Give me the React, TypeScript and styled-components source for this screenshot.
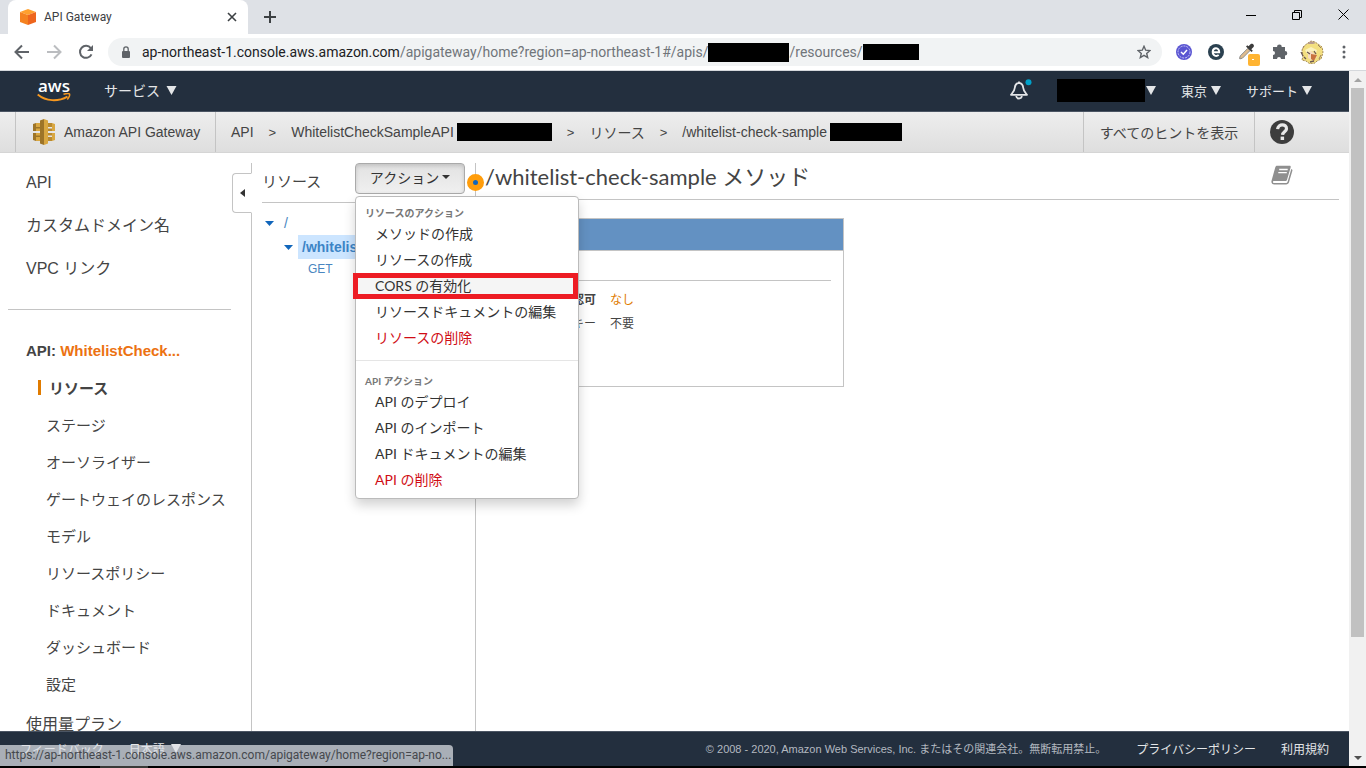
import React from "react";
import styled, { createGlobalStyle, css } from "styled-components";

const sans = '"Liberation Sans", "Noto Sans CJK JP", sans-serif';
const chromeUi = 'Roboto, "Noto Sans CJK JP", sans-serif';
const lato = 'Lato, "Noto Sans CJK JP", sans-serif';

const GlobalStyle = createGlobalStyle`
  * { box-sizing: border-box; }
  body { margin: 0; background: #fff; color: #444; font-family: ${sans}; font-size: 14px; }
  a { color: inherit; text-decoration: none; }
  button { font: inherit; color: inherit; background: none; border: 0; padding: 0; cursor: pointer; }
  ul { list-style: none; margin: 0; padding: 0; }
  svg { display: block; flex: none; }
`;

const BrowserWindow = styled.div`
  position: relative;
  display: flex;
  flex-direction: column;
  height: 100vh;
  overflow: hidden;
`;

/* ---------- browser frame ---------- */

const TabStrip = styled.div`
  flex: none;
  display: flex;
  height: 34px;
  padding-left: 8px;
  background: #dee1e6;
  font-family: ${chromeUi};
`;

const Tab = styled.div`
  display: flex;
  align-items: center;
  width: 240px;
  padding: 0 10px 0 12px;
  border-radius: 8px 8px 0 0;
  background: #fff;
  color: #3c4043;
  font-size: 12px;
`;

const TabTitle = styled.span`
  flex: 1;
  margin-left: 8px;
`;

const IconButton = styled.button`
  display: flex;
  align-items: center;
  justify-content: center;
`;

const NewTab = styled(IconButton)`
  width: 44px;
`;

const WindowControls = styled.div`
  display: flex;
  margin-left: auto;
  height: 29px;

  button { width: 46px; }
`;

const Toolbar = styled.div`
  flex: none;
  display: flex;
  align-items: center;
  height: 37px;
  padding: 0 10px 0 14px;
  border-bottom: 1px solid #d5d8dc;
  background: #fff;
`;

const NavButtons = styled.div`
  display: flex;
  gap: 16px;
  margin-right: 14px;
`;

const AddressBar = styled.div`
  flex: 1;
  display: flex;
  align-items: center;
  height: 28px;
  padding: 0 11px 0 12px;
  border-radius: 14px;
  background: #f1f3f4;
  font-family: ${chromeUi};
  font-size: 14px;
  color: #70757a;
  white-space: nowrap;
`;

const Host = styled.span`
  margin-left: 10px;
  color: #202124;
`;

const Redacted = styled.span<{ $w: number; $h: number }>`
  flex: none;
  width: ${(p) => p.$w}px;
  height: ${(p) => p.$h}px;
  background: #000;
`;

const BarEnd = styled.span`
  display: flex;
  margin-left: auto;
`;

const Extensions = styled.div`
  display: flex;
  align-items: center;
  gap: 8px;
  margin-left: 10px;
`;

const Viewport = styled.div`
  flex: 1;
  min-height: 0;
  display: flex;
`;

const Page = styled.div`
  flex: 1;
  min-width: 0;
  display: flex;
  flex-direction: column;
`;

const Scrollbar = styled.div`
  flex: none;
  display: flex;
  flex-direction: column;
  align-items: center;
  width: 17px;
  background: #f1f1f1;
`;

const ScrollTrack = styled.div`
  flex: 1;
  width: 13px;
`;

const ScrollThumb = styled.div`
  height: 83%;
  background: #c1c1c1;
`;

const ScrollArrow = styled(IconButton)`
  width: 17px;
  height: 17px;
`;

const DesktopEdge = styled.div`
  flex: none;
  height: 2px;
  padding-left: 100px;
  background: #000;

  &::before { content: ""; display: block; width: 48px; height: 2px; background: #3a3a38; }
`;

const StatusBubble = styled.div`
  position: absolute;
  left: 0;
  bottom: 2px;
  width: 453px;
  height: 21px;
  padding: 0 5px;
  border-radius: 0 4px 0 0;
  background: rgba(222, 225, 230, 0.72);
  color: #45484d;
  font-family: ${chromeUi};
  font-size: 12px;
  line-height: 21px;
  white-space: nowrap;
  overflow: hidden;
`;

/* ---------- console header ---------- */

const TopNav = styled.header`
  flex: none;
  display: flex;
  align-items: center;
  height: 41px;
  padding: 0 37px 2px;
  border-bottom: 1px solid #4b5563;
  background: #232f3e;
  color: #e4e6e8;
`;

const AwsLogo = styled.a`
  display: flex;
  flex-direction: column;
  align-items: center;
  width: 34px;
  color: #fff;
  font-family: "Open Sans", sans-serif;
  font-weight: 600;
  font-size: 17px;
  line-height: 14px;
`;

const NavMenu = styled.button<{ $size: number; $gap: number }>`
  display: flex;
  align-items: center;
  gap: ${(p) => p.$gap}px;
  font-size: ${(p) => p.$size}px;
`;

const ServicesMenu = styled(NavMenu)`
  margin-left: 33px;
`;

const NavRight = styled.div`
  display: flex;
  align-items: center;
  gap: 25px;
  margin-left: auto;
`;

const Account = styled.button`
  display: flex;
  align-items: center;
  gap: 1px;
`;

const CrumbBar = styled.div`
  flex: none;
  display: flex;
  height: 41px;
  padding-left: 15px;
  border-bottom: 1px solid #d5d5d5;
  background: linear-gradient(#eee, #dedede);
  font-size: 14px;
`;

const cell = css`
  display: flex;
  align-items: center;
  border-left: 1px solid #c4c4c4;
`;

const ServiceCell = styled.a`
  ${cell}
  width: 200px;
  padding-left: 16px;
  gap: 8px;
`;

const Crumbs = styled.nav`
  ${cell}
  flex: 1;
  padding-left: 15px;
  gap: 15px;
  white-space: nowrap;
`;

const Crumb = styled.a`
  display: flex;
  align-items: center;
  gap: 3px;
`;

const Separator = styled.span`
  font-size: 13px;
`;

const HintsCell = styled.button`
  ${cell}
  width: 171px;
  justify-content: center;
  border-left: 1px solid #c4c4c4;
`;

const HelpCell = styled.button`
  ${cell}
  width: 95px;
  padding-left: 15px;
  border-left: 1px solid #c4c4c4;
`;

/* ---------- body columns ---------- */

const Body = styled.div`
  flex: 1;
  min-height: 0;
  display: flex;
  padding-top: 10px;
  overflow: hidden;
`;

const Sidebar = styled.aside`
  position: relative;
  flex: none;
  width: 252px;
  border-right: 1px solid #c4c4c4;
`;

const CollapseTab = styled.button`
  position: absolute;
  top: 10px;
  right: -1px;
  display: flex;
  align-items: center;
  width: 20px;
  height: 40px;
  padding-left: 7px;
  border: 1px solid #c4c4c4;
  border-right: 1px solid #fff;
  border-radius: 4px 0 0 4px;
  background: #fff;
`;

const TopLinks = styled.ul`
  margin: 0 20px 0 8px;
  padding: 0 18px 17px;
  border-bottom: 1px solid #c4c4c4;
  font-size: 16px;
  white-space: nowrap;

  li { height: 43px; line-height: 40px; }
`;

const ApiHeading = styled.h2`
  margin: 31px 0 8px 26px;
  font-size: 15px;
  line-height: 20px;

  a { color: #ec7211; }
`;

const SubLink = styled.li<{ $active?: boolean }>`
  display: flex;
  align-items: center;
  height: 37px;
  padding-left: 46px;
  font-size: 15px;
  white-space: nowrap;
  ${(p) =>
    p.$active &&
    css`
      padding-left: 38px;
      font-weight: bold;
      &::before { content: ""; width: 3px; height: 15px; margin-right: 8px; background: #e07b00; }
    `}
`;

const PlanLink = styled.a`
  display: block;
  margin-left: 26px;
  font-size: 16px;
  line-height: 46px;
`;

const ResourcePanel = styled.section`
  position: relative;
  z-index: 1;
  flex: none;
  width: 224px;
  padding-left: 10px;
  border-right: 1px solid #c4c4c4;
`;

const PanelHead = styled.div`
  display: flex;
  align-items: flex-start;
  justify-content: space-between;
  height: 40px;
  padding-right: 10px;
  border-bottom: 1px solid #c4c4c4;
`;

const PanelTitle = styled.h2`
  margin: 0;
  font-size: 15px;
  font-weight: normal;
  line-height: 38px;
`;

const ActionWrap = styled.div`
  position: relative;
`;

const ActionButton = styled.button`
  display: flex;
  align-items: center;
  justify-content: center;
  gap: 3px;
  width: 110px;
  height: 31px;
  padding-bottom: 3px;
  border: 1px solid #aaa;
  border-radius: 4px;
  background: linear-gradient(#e2e2e2, #f0f0f0);
  box-shadow: inset 0 2px 4px rgba(0, 0, 0, 0.15);
  color: #333;
  font-family: ${lato};
  font-size: 14px;
`;

const Menu = styled.div`
  position: absolute;
  top: 33px;
  left: 0;
  width: 224px;
  padding: 8px 0 5px;
  border: 1px solid #bbb;
  border-radius: 4px;
  background: #fff;
  box-shadow: 0 6px 12px rgba(0, 0, 0, 0.18);
  font-family: ${lato};
`;

const MenuLabel = styled.div`
  height: 16px;
  padding-left: 9px;
  color: #777;
  font-size: 10px;
  font-weight: bold;
  line-height: 16px;
`;

const MenuItem = styled.a<{ $danger?: boolean; $marked?: boolean }>`
  position: relative;
  display: block;
  height: 26px;
  padding-left: 19px;
  color: ${(p) => (p.$danger ? "#d00d15" : "#333")};
  font-size: 14px;
  line-height: 26px;
  white-space: nowrap;
  ${(p) =>
    p.$marked &&
    css`
      background: #f5f5f5;
      &::after { content: ""; position: absolute; inset: 0 0 0 -3px; border: 5px solid #ed1c24; }
    `}
`;

const MenuRule = styled.div`
  height: 1px;
  margin: 9px 0 12px;
  background: #e5e5e5;
`;

const Tree = styled.ul`
  padding-top: 8px;
  color: #4a86c0;
  overflow: hidden;
`;

const TreeNode = styled.li<{ $depth: number }>`
  display: flex;
  align-items: center;
  gap: 10px;
  height: 24px;
  padding-left: ${(p) => 3 + p.$depth * 19}px;
`;

const SelectedPath = styled.a`
  flex: 1;
  margin-left: -5px;
  padding-left: 4px;
  background: #cce5ff;
  color: #3c84c6;
  font-size: 14px;
  font-weight: bold;
  line-height: 24px;
  white-space: nowrap;
  overflow: hidden;
`;

const MethodNode = styled.li`
  padding-left: 46px;
  font-size: 12px;
  line-height: 20px;
`;

const SplitHandle = styled.button`
  position: absolute;
  top: 11px;
  right: -9px;
  width: 17px;
  height: 17px;
  border: 6px solid #ff9d0b;
  border-radius: 50%;
  background: #1166bb;
`;

const Detail = styled.main`
  flex: 1;
  min-width: 0;
  padding: 0 10px 0 9px;
`;

const DetailHead = styled.div`
  display: flex;
  align-items: flex-start;
  justify-content: space-between;
  height: 37px;
  padding-right: 46px;
  border-bottom: 1px solid #c4c4c4;
`;

const DocsButton = styled(IconButton)`
  height: 24px;
`;

const DetailTitle = styled.h1`
  margin: 0;
  color: #444;
  font-family: ${lato};
  font-size: 22px;
  font-weight: normal;
  line-height: 28px;
`;

const MethodCard = styled.section`
  width: 359px;
  height: 169px;
  margin-top: 18px;
  border: 1px solid #c4c4c4;
`;

const CardBand = styled.div`
  height: 32px;
  border-bottom: 1px solid #c4c4c4;
  background: #6391c2;
`;

const Facts = styled.dl`
  display: grid;
  grid-template-columns: 98px 1fr;
  column-gap: 14px;
  margin: 29px 12px 0;
  padding-top: 7px;
  border-top: 1px solid #c4c4c4;
  font-size: 12px;
  line-height: 24px;

  dt { text-align: right; }
  dt:first-of-type { font-weight: bold; }
  dd { margin: 0; }
  dd:first-of-type { color: #e07b00; }
`;

/* ---------- footer ---------- */

const Footer = styled.footer`
  flex: none;
  display: flex;
  align-items: center;
  gap: 25px;
  height: 35px;
  padding: 0 20px 2px;
  border-top: 1px solid #4b5563;
  background: #232f3e;
  color: #e4e6e8;
  font-size: 12px;
  white-space: nowrap;
`;

const Legal = styled.span`
  margin: 0 5px 0 auto;
  color: #b3b9c0;
  font-size: 11px;
`;

/* ---------- icons ---------- */

const Caret = ({ w = 10, h = 9 }: { w?: number; h?: number }) => (
  <svg width={w} height={h} viewBox="0 0 10 9"><path d="M0 0h10L5 9z" fill="currentColor" /></svg>
);

const CubeIcon = () => (
  <svg width="16" height="16" viewBox="0 0 16 16">
    <path d="M8 0l8 3-8 3-8-3z" fill="#ffa02e" />
    <path d="M0 3l8 3v10l-8-3z" fill="#f58220" />
    <path d="M16 3L8 6v10l8-3z" fill="#ee651d" />
  </svg>
);

const GatewayIcon = () => (
  <svg width="24" height="26" viewBox="0 0 24 26">
    <path d="M1 5l3-1v3h5v3H4v2H1zM1 14h3v2h5v3H4v3l-3-1z" fill="#9d7428" />
    <path d="M4 4h4v4H4zM4 9.500h5V12H4zM4 14h5v2.500H4zM4 18h4v4H4z" fill="#d9a741" />
    <path d="M23 5l-3-1v8h3zM23 14h-3v8l3-1z" fill="#d9a741" />
    <path d="M16 4h4v4h-4zM15 9.500h5V12h-5zM15 14h5v2.500h-5zM16 18h4v4h-4z" fill="#b98a30" />
    <path d="M8 1.500L12 0v26l-4-1.500z" fill="#9d7428" />
    <path d="M12 0l4 1.500v23L12 26z" fill="#d9a741" />
  </svg>
);

const Smile = () => (
  <svg width="34" height="9" viewBox="0 0 34 9" fill="none" stroke="#f7981f">
    <path d="M.7 1.500C9 8.500 21 9 30.500 3.600" strokeWidth="1.800" />
    <path d="M26.500 1.300c3-.9 5.500-.8 6-.2s-.2 3.200-2.200 5.400" strokeWidth="1.500" />
  </svg>
);

const BellIcon = () => (
  <svg width="23" height="22" viewBox="0 0 23 22" fill="none" stroke="#e4e6e8" strokeWidth="1.800">
    <path d="M10 3.800c-2.800.4-4 2.300-4.200 5-.2 3-1.800 4.400-3.800 7h16c-2-2.600-3.600-4-3.800-7-.2-2.700-1.400-4.600-4.200-5z" strokeLinejoin="round" />
    <path d="M10 4V2.400M7.200 17c.3 3.300 5.300 3.300 5.600 0" />
    <circle cx="19.500" cy="3.200" r="3" fill="#00a1c9" stroke="none" />
  </svg>
);

const HelpIcon = () => (
  <svg width="24" height="24" viewBox="0 0 24 24">
    <circle cx="12" cy="12" r="12" fill="#3d3d3d" />
    <path d="M7.600 9.200c.4-6 9.200-5.600 8.900-.4-.2 3-3.700 3-3.900 6" fill="none" stroke="#e8e8e8" strokeWidth="3.200" />
    <rect x="10.600" y="16.600" width="3.500" height="3.400" fill="#e8e8e8" />
  </svg>
);

const BookIcon = () => (
  <svg width="22" height="20" viewBox="0 0 22 20">
    <path d="M6 .7h12.500c1 0 1.400.6 1.200 1.500l-3.600 12.300c-.3 1-.9 1.500-2 1.500H3c-1.500 0-1.300 2 .2 2h11.500c1 0 1.600-.4 1.900-1.300L20.300 4c1 .3 1.400 1 1 2L18 17.300c-.4 1.300-1.400 2.100-2.900 2.100H3.300C1 19.400-.1 17.500.6 15.600L4.300 2.300C4.600 1.300 5.100.7 6 .7z" fill="#8f8f8f" />
    <path d="M8.200 4.500h8.500M7.300 7.700h8.500" stroke="#fff" strokeWidth="1.300" />
  </svg>
);

const EyedropperIcon = () => (
  <svg width="24" height="28" viewBox="0 0 24 28">
    <path d="M3.500 20.500l.8-2.600 7.500-7.500 2.200 2.200-7.500 7.500-2.600.8z" fill="#e0bb8c" stroke="#8a8a8a" />
    <path d="M10 8.500l5.500 5.500 1.300-1.300-1.500-1.500 2.200-2.200c1.600-1.800-1.200-4.400-3-2.800l-2 2-1.200-1z" fill="#3c3c3c" />
    <rect x="12" y="16" width="12" height="12" rx="2" fill="#ffb432" />
    <path d="M16 21.500h2" stroke="#fff" />
  </svg>
);

const AvatarIcon = () => (
  <svg width="24" height="24" viewBox="0 0 24 24">
    <path d="M2 10l2-4 4-3 3-2 4 1 3 2 4 3 1 5-1 4-1 3-4 2-2 2-5 1-4-3-4-1 1-4z" fill="#f3df80" stroke="#a58a55" strokeDasharray="2 1" />
    <path d="M7 4l4-3 5 2-3 1z" fill="#b79a90" />
    <path d="M5 10l6-3 6 3-1 3-4-2-5 3z" fill="#fbf2bd" />
    <path d="M8 12l3-1 4 3 2 3-4 4-5-3z" fill="#f5dcc0" />
    <path d="M11 14l6 1-3 6-3-2z" fill="#c8713f" />
    <path d="M7 12l3 2M14 11l2 3M1 12l2 4M4 17l2 2M10 22l4-1" stroke="#6b5850" strokeWidth="1.300" />
    <path d="M3 8l1-2M18 5l3 3M21 15l-2 4" stroke="#9a8064" />
  </svg>
);

const topLinks = ["API", "カスタムドメイン名", "VPC リンク"];
const subLinks = ["リソース", "ステージ", "オーソライザー", "ゲートウェイのレスポンス", "モデル", "リソースポリシー", "ドキュメント", "ダッシュボード", "設定"];

export default function App() {
  return (
    <BrowserWindow>
      <GlobalStyle />
      <TabStrip>
        <Tab>
          <CubeIcon />
          <TabTitle>API Gateway</TabTitle>
          <IconButton aria-label="Close tab">
            <svg width="12" height="12" viewBox="0 0 12 12" stroke="#3c4043" strokeWidth="1.600"><path d="M2 2l8 8M10 2l-8 8" /></svg>
          </IconButton>
        </Tab>
        <NewTab aria-label="New tab">
          <svg width="12" height="12" viewBox="0 0 12 12" stroke="#3c4043" strokeWidth="2"><path d="M6 0v12M0 6h12" /></svg>
        </NewTab>
        <WindowControls>
          <IconButton aria-label="Minimize">
            <svg width="10" height="10" stroke="#000"><path d="M0 5.500h10" /></svg>
          </IconButton>
          <IconButton aria-label="Restore">
            <svg width="10" height="10" fill="none" stroke="#000"><path d="M.5 2.500h7v7h-7zM2.500 2.500v-2h7v7h-2" /></svg>
          </IconButton>
          <IconButton aria-label="Close">
            <svg width="11" height="11" stroke="#000"><path d="M.5.5l10 10M10.500.5l-10 10" /></svg>
          </IconButton>
        </WindowControls>
      </TabStrip>

      <Toolbar>
        <NavButtons>
          <IconButton aria-label="Back">
            <svg width="16" height="16" viewBox="0 0 16 16" fill="none" stroke="#5f6368" strokeWidth="2"><path d="M15 8H2M8 1.500L1.500 8 8 14.500" /></svg>
          </IconButton>
          <IconButton aria-label="Forward">
            <svg width="16" height="16" viewBox="0 0 16 16" fill="none" stroke="#bbbdc0" strokeWidth="2"><path d="M1 8h13M8 1.500L14.500 8 8 14.500" /></svg>
          </IconButton>
          <IconButton aria-label="Reload">
            <svg width="16" height="16" viewBox="0 0 16 16" fill="none" stroke="#5f6368" strokeWidth="2"><path d="M13.500 10.300A6 6 0 1 1 12.800 4.200" /><path d="M15 1v6H9z" fill="#5f6368" stroke="none" /></svg>
          </IconButton>
        </NavButtons>
        <AddressBar>
          <svg width="12" height="13" viewBox="0 0 12 13"><rect x="2" y="5" width="8" height="7" rx="1" fill="#5f6368" /><path d="M3.800 5V3a2.200 2.200 0 0 1 4.400 0v2" fill="none" stroke="#5f6368" strokeWidth="1.300" /></svg>
          <Host>ap-northeast-1.console.aws.amazon.com</Host>
          <span>/apigateway/home?region=ap-northeast-1#/apis/</span>
          <Redacted $w={81} $h={19} />
          <span>/resources/</span>
          <Redacted $w={56} $h={16} />
          <BarEnd>
            <IconButton aria-label="Bookmark">
              <svg width="14" height="14" viewBox="0 0 14 14" fill="none" stroke="#5f6368" strokeWidth="1.400"><path d="M7 1.300l1.700 3.900 4.200.4-3.200 2.800 1 4.200L7 10.400l-3.700 2.200 1-4.200L1.100 5.600l4.200-.4z" /></svg>
            </IconButton>
          </BarEnd>
        </AddressBar>
        <Extensions>
          <IconButton aria-label="Checker">
            <svg width="24" height="16" viewBox="0 0 24 16"><circle cx="12" cy="8" r="8" fill="#5a55d2" /><circle cx="12" cy="8" r="6" fill="none" stroke="#c9c7f5" strokeDasharray="2 1" /><path d="M9 8l2.300 2.200L15 6" fill="none" stroke="#fff" strokeWidth="1.500" /></svg>
          </IconButton>
          <IconButton aria-label="Web helper">
            <svg width="24" height="16" viewBox="0 0 24 16"><circle cx="12" cy="8" r="8" fill="#2b4150" /><path d="M9 8.300h6.200C15.500 3 9 2.800 8.700 7.800c0 4.400 3.800 4.800 6 3.200" fill="none" stroke="#fff" strokeWidth="2" /></svg>
          </IconButton>
          <IconButton aria-label="Color picker"><EyedropperIcon /></IconButton>
          <IconButton aria-label="Extensions">
            <svg width="24" height="16" viewBox="0 0 24 16"><path d="M5 3h4a2.400 2.400 0 0 1 4.800 0H17v4a2.300 2.300 0 0 1 0 4.600V15h-4a2 2 0 0 0-4 0H5v-4a2 2 0 0 0 0-4z" fill="#5f6368" /></svg>
          </IconButton>
          <IconButton aria-label="Profile"><AvatarIcon /></IconButton>
          <IconButton aria-label="More">
            <svg width="24" height="14" viewBox="0 0 24 14" fill="#5f6368"><circle cx="12" cy="2" r="1.500" /><circle cx="12" cy="7" r="1.500" /><circle cx="12" cy="12" r="1.500" /></svg>
          </IconButton>
        </Extensions>
      </Toolbar>

      <Viewport>
        <Page>
          <TopNav>
            <AwsLogo href="#aws">aws<Smile /></AwsLogo>
            <ServicesMenu $size={14} $gap={6}>サービス<Caret w={11} /></ServicesMenu>
            <NavRight>
              <IconButton aria-label="Notifications"><BellIcon /></IconButton>
              <Account aria-label="Account"><Redacted $w={88} $h={23} /><Caret /></Account>
              <NavMenu $size={13} $gap={4}>東京<Caret /></NavMenu>
              <NavMenu $size={13} $gap={4}>サポート<Caret /></NavMenu>
            </NavRight>
          </TopNav>

          <CrumbBar>
            <ServiceCell href="#home"><GatewayIcon />Amazon API Gateway</ServiceCell>
            <Crumbs>
              <Crumb href="#apis">API</Crumb>
              <Separator>&gt;</Separator>
              <Crumb href="#api">WhitelistCheckSampleAPI<Redacted $w={95} $h={18} /></Crumb>
              <Separator>&gt;</Separator>
              <Crumb href="#resources">リソース</Crumb>
              <Separator>&gt;</Separator>
              <Crumb href="#resource">/whitelist-check-sample<Redacted $w={72} $h={18} /></Crumb>
            </Crumbs>
            <HintsCell>すべてのヒントを表示</HintsCell>
            <HelpCell aria-label="Help"><HelpIcon /></HelpCell>
          </CrumbBar>

          <Body>
            <Sidebar>
              <TopLinks>
                {topLinks.map((t) => <li key={t}><a href="#nav">{t}</a></li>)}
              </TopLinks>
              <ApiHeading>API: <a href="#api">WhitelistCheck...</a></ApiHeading>
              <ul>
                {subLinks.map((t, i) => <SubLink key={t} $active={i === 0}><a href="#sub">{t}</a></SubLink>)}
              </ul>
              <PlanLink href="#plans">使用量プラン</PlanLink>
              <CollapseTab aria-label="Collapse">
                <svg width="5" height="8"><path d="M5 0v8L0 4z" fill="#333" /></svg>
              </CollapseTab>
            </Sidebar>

            <ResourcePanel>
              <PanelHead>
                <PanelTitle>リソース</PanelTitle>
                <ActionWrap>
                  <ActionButton>アクション<svg width="8" height="4"><path d="M0 0h8L4 4z" fill="#333" /></svg></ActionButton>
                  <Menu>
                    <MenuLabel>リソースのアクション</MenuLabel>
                    <MenuItem href="#a">メソッドの作成</MenuItem>
                    <MenuItem href="#b">リソースの作成</MenuItem>
                    <MenuItem href="#c" $marked>CORS の有効化</MenuItem>
                    <MenuItem href="#d">リソースドキュメントの編集</MenuItem>
                    <MenuItem href="#e" $danger>リソースの削除</MenuItem>
                    <MenuRule />
                    <MenuLabel>API アクション</MenuLabel>
                    <MenuItem href="#f">API のデプロイ</MenuItem>
                    <MenuItem href="#g">API のインポート</MenuItem>
                    <MenuItem href="#h">API ドキュメントの編集</MenuItem>
                    <MenuItem href="#i" $danger>API の削除</MenuItem>
                  </Menu>
                </ActionWrap>
              </PanelHead>
              <Tree>
                <TreeNode $depth={0}>
                  <svg width="9" height="5"><path d="M0 0h9L4.500 5z" fill="#1166bb" /></svg>
                  <a href="#root">/</a>
                </TreeNode>
                <TreeNode $depth={1}>
                  <svg width="9" height="5"><path d="M0 0h9L4.500 5z" fill="#1166bb" /></svg>
                  <SelectedPath href="#path">/whitelist</SelectedPath>
                </TreeNode>
                <MethodNode><a href="#get">GET</a></MethodNode>
              </Tree>
              <SplitHandle aria-label="Resize" />
            </ResourcePanel>

            <Detail>
              <DetailHead>
                <DetailTitle>/whitelist-check-sample メソッド</DetailTitle>
                <DocsButton aria-label="Documentation"><BookIcon /></DocsButton>
              </DetailHead>
              <MethodCard>
                <CardBand />
                <Facts>
                  <dt>認可</dt><dd>なし</dd>
                  <dt>キー</dt><dd>不要</dd>
                </Facts>
              </MethodCard>
            </Detail>
          </Body>

          <Footer>
            <a href="#feedback">フィードバック</a>
            <NavMenu $size={12} $gap={6}>日本語<Caret /></NavMenu>
            <Legal>© 2008 - 2020, Amazon Web Services, Inc. またはその関連会社。無断転用禁止。</Legal>
            <a href="#privacy">プライバシーポリシー</a>
            <a href="#terms">利用規約</a>
          </Footer>
        </Page>
        <Scrollbar>
          <ScrollArrow aria-label="Scroll up"><svg width="8" height="4"><path d="M0 4h8L4 0z" fill="#a3a3a3" /></svg></ScrollArrow>
          <ScrollTrack><ScrollThumb /></ScrollTrack>
          <ScrollArrow aria-label="Scroll down"><svg width="8" height="4"><path d="M0 0h8L4 4z" fill="#505050" /></svg></ScrollArrow>
        </Scrollbar>
      </Viewport>
      <DesktopEdge />
      <StatusBubble>https://ap-northeast-1.console.aws.amazon.com/apigateway/home?region=ap-no...</StatusBubble>
    </BrowserWindow>
  );
}
